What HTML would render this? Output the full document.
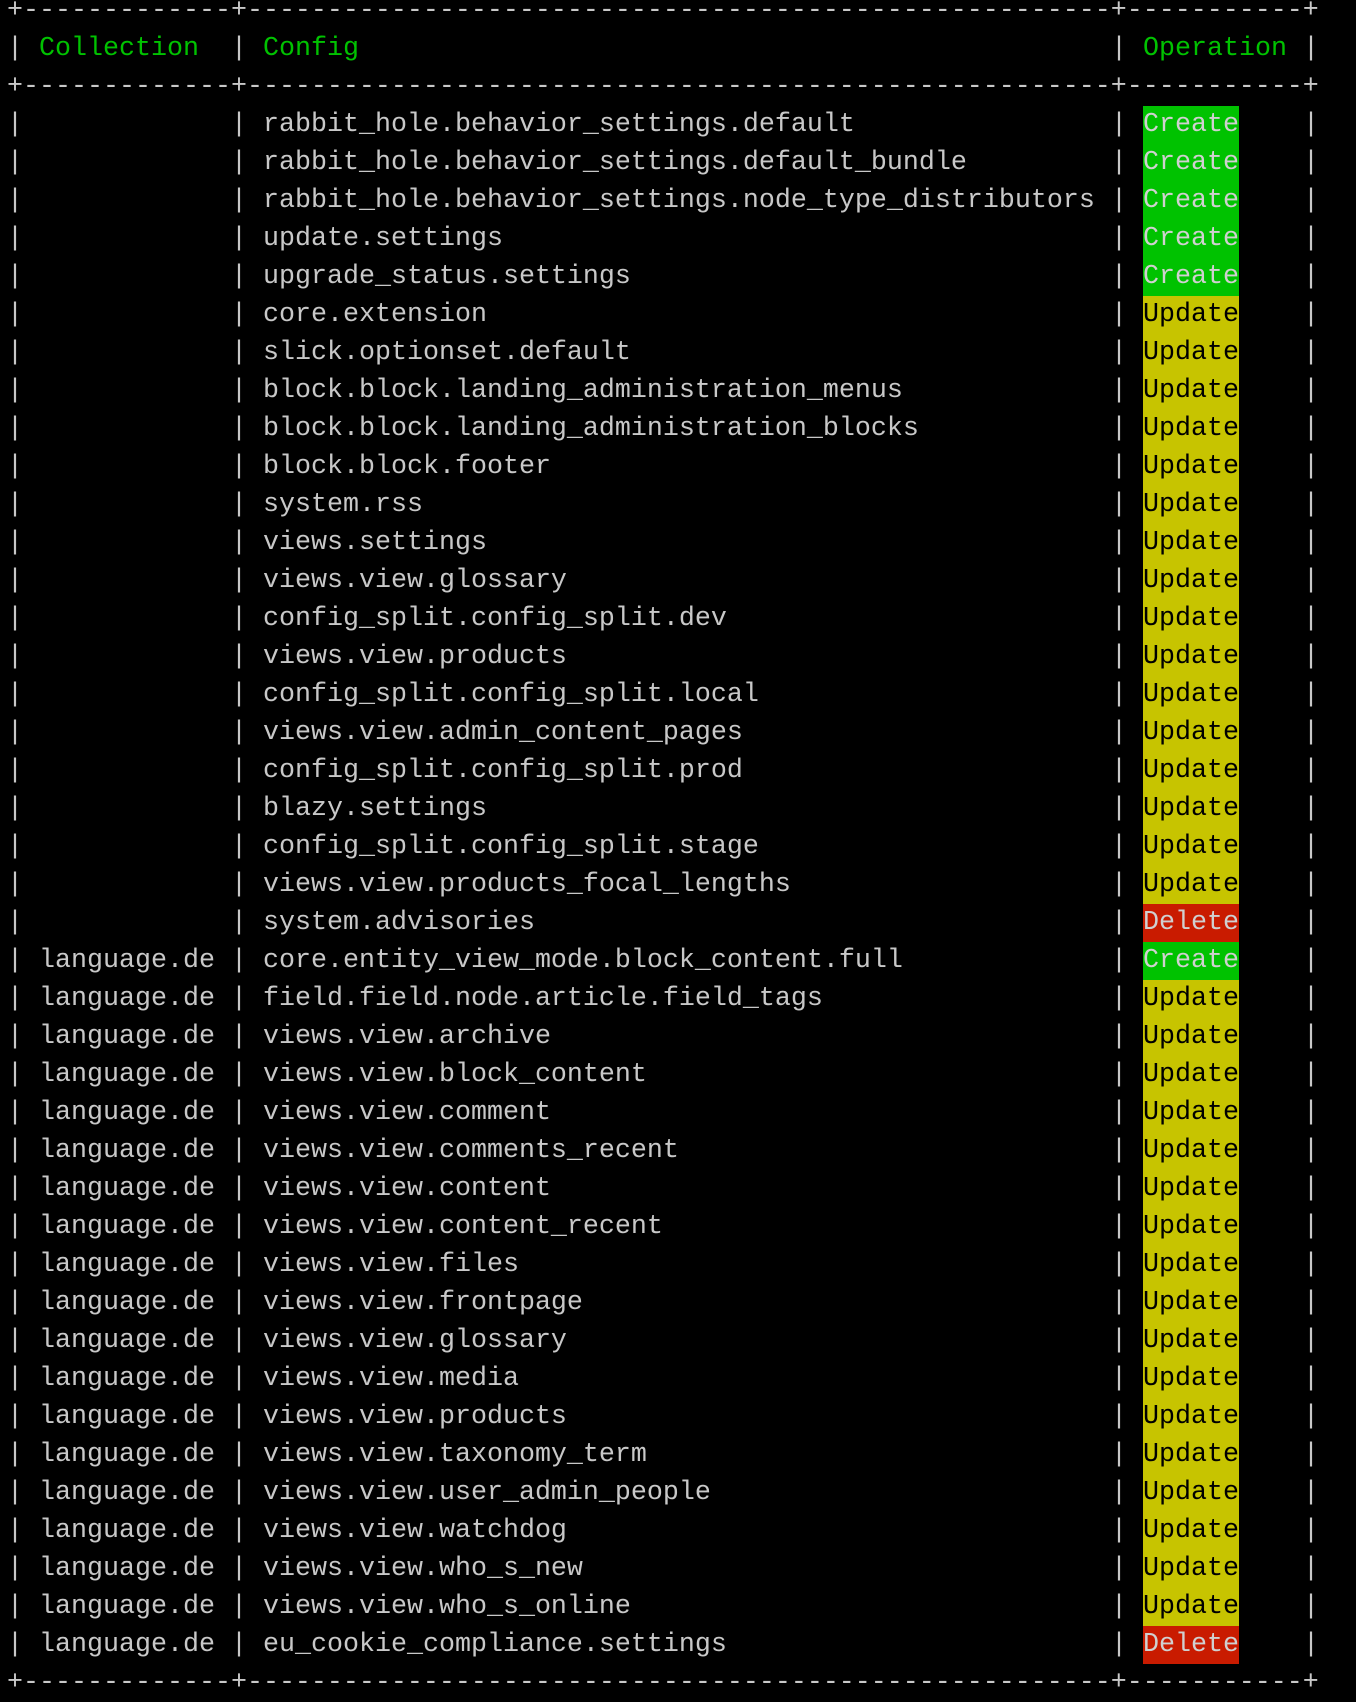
<!DOCTYPE html>
<html><head><meta charset="utf-8"><style>
html,body{margin:0;padding:0;background:#000;width:1356px;height:1702px;overflow:hidden}
body{font-family:"Liberation Mono",monospace;font-size:26.67px;color:#c8c8c8}
#w{position:absolute;top:-8px;left:0}
.r{position:relative;height:38px;line-height:38px;white-space:pre}
.r span{position:absolute;top:0;height:38px}
.a{left:7px}.b{left:231px}.c{left:1111px}.d{left:1303px}
.t1{left:39px}.t2{left:263px}.t3{left:1143px;width:96px}
.g{color:#00c200}
.C{background:#00c200;color:#d0d0d0}
.U{background:#c7c400;color:#000}
.D{background:#c91b00;color:#d0d0d0}
.bd{position:absolute;left:7px}
</style></head><body><div id="w">
<div class="r"><span class="bd">+-------------+------------------------------------------------------+-----------+</span></div>
<div class="r"><span class="a">|</span><span class="t1 g">Collection</span><span class="b">|</span><span class="t2 g">Config</span><span class="c">|</span><span class="t3 g" style="width:auto">Operation</span><span class="d">|</span></div>
<div class="r"><span class="bd">+-------------+------------------------------------------------------+-----------+</span></div>
<div id="rows"></div>
<div class="r"><span class="bd">+-------------+------------------------------------------------------+-----------+</span></div>
</div>
<script>
var d=[
["","rabbit_hole.behavior_settings.default","C"],
["","rabbit_hole.behavior_settings.default_bundle","C"],
["","rabbit_hole.behavior_settings.node_type_distributors","C"],
["","update.settings","C"],
["","upgrade_status.settings","C"],
["","core.extension","U"],
["","slick.optionset.default","U"],
["","block.block.landing_administration_menus","U"],
["","block.block.landing_administration_blocks","U"],
["","block.block.footer","U"],
["","system.rss","U"],
["","views.settings","U"],
["","views.view.glossary","U"],
["","config_split.config_split.dev","U"],
["","views.view.products","U"],
["","config_split.config_split.local","U"],
["","views.view.admin_content_pages","U"],
["","config_split.config_split.prod","U"],
["","blazy.settings","U"],
["","config_split.config_split.stage","U"],
["","views.view.products_focal_lengths","U"],
["","system.advisories","D"],
["language.de","core.entity_view_mode.block_content.full","C"],
["language.de","field.field.node.article.field_tags","U"],
["language.de","views.view.archive","U"],
["language.de","views.view.block_content","U"],
["language.de","views.view.comment","U"],
["language.de","views.view.comments_recent","U"],
["language.de","views.view.content","U"],
["language.de","views.view.content_recent","U"],
["language.de","views.view.files","U"],
["language.de","views.view.frontpage","U"],
["language.de","views.view.glossary","U"],
["language.de","views.view.media","U"],
["language.de","views.view.products","U"],
["language.de","views.view.taxonomy_term","U"],
["language.de","views.view.user_admin_people","U"],
["language.de","views.view.watchdog","U"],
["language.de","views.view.who_s_new","U"],
["language.de","views.view.who_s_online","U"],
["language.de","eu_cookie_compliance.settings","D"]];
var n={C:"Create",U:"Update",D:"Delete"},h="";
d.forEach(function(x){h+='<div class="r"><span class="a">|</span><span class="t1">'+x[0]+'</span><span class="b">|</span><span class="t2">'+x[1]+'</span><span class="c">|</span><span class="t3 '+x[2]+'">'+n[x[2]]+'</span><span class="d">|</span></div>';});
document.getElementById("rows").outerHTML=h;
</script>
</body></html>
